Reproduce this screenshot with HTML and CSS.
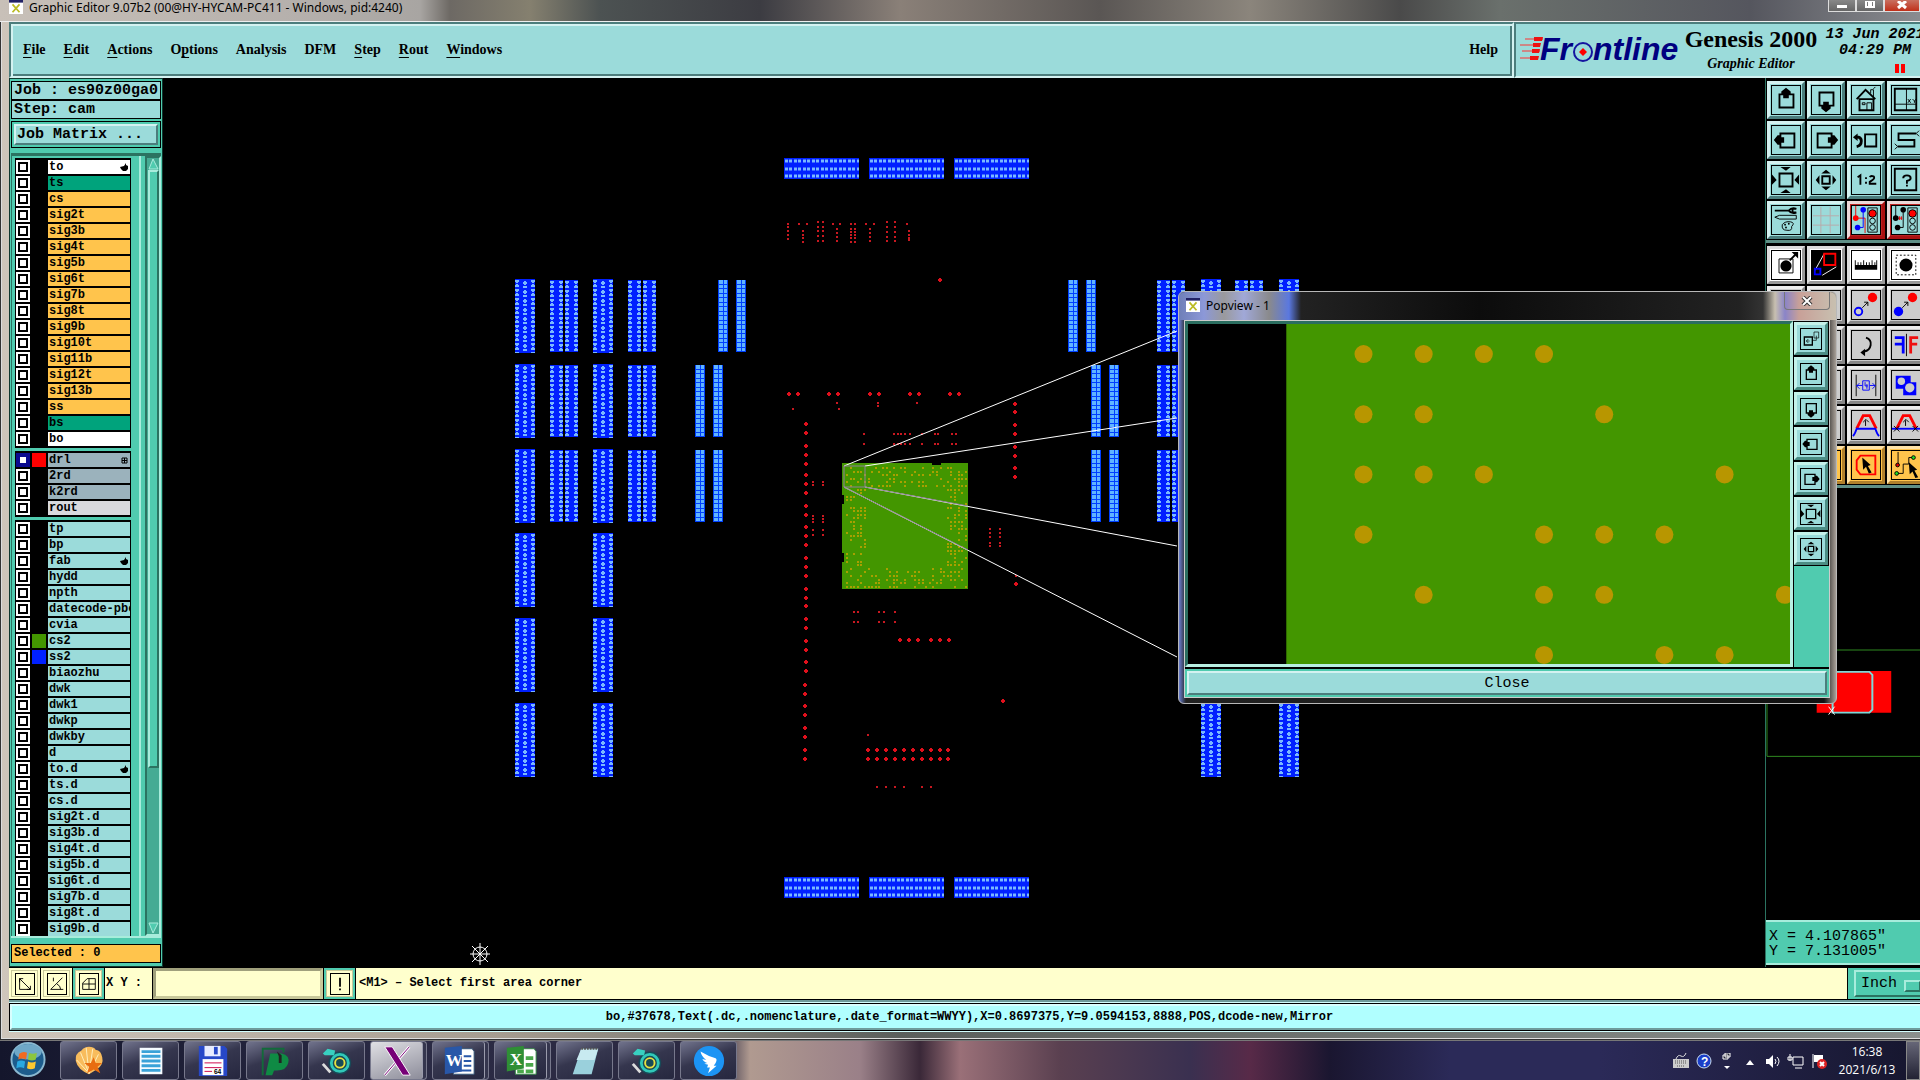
FILE: index.html
```
<!DOCTYPE html>
<html lang="en">
<head>
    <meta charset="UTF-8">
    <meta name="viewport" content="width=device-width, initial-scale=1.0">
    <title>Graphic Editor 9.07b2</title>
    <link rel="stylesheet" href="styles.css">
</head>
<body>

<!-- Icon set, all drawn on a 30x30 grid -->
<svg class="defs" width="0" height="0">
    <symbol id="pan-up" viewBox="0 0 30 30"><path d="M8 9h15v14H8z" fill="none" stroke="#000" stroke-width="2"/><path d="M15 2l5 4v3h-2v4h-6V9h-2V6z"/></symbol>
    <symbol id="pan-down" viewBox="0 0 30 30"><path d="M8 7h15v14H8z" fill="none" stroke="#000" stroke-width="2"/><path d="M15 28l-5-4v-3h2v-4h6v4h2v3z"/></symbol>
    <symbol id="pan-left" viewBox="0 0 30 30"><path d="M9 8h15v15H9z" fill="none" stroke="#000" stroke-width="2"/><path d="M2 15l4-5h3v2h4v6H9v2H6z"/></symbol>
    <symbol id="pan-right" viewBox="0 0 30 30"><path d="M6 8h15v15H6z" fill="none" stroke="#000" stroke-width="2"/><path d="M28 15l-4-5h-3v2h-4v6h4v2h3z"/></symbol>
    <symbol id="home" viewBox="0 0 30 30"><g fill="none" stroke="#000"><path d="M5 14L14.500 4L25 14M8 14h15v12H8z" stroke-width="2"/><path d="M20 8V4h3v8M23 3l2-2M16 26v-8h5v8M11 18h3v2h-3z"/></g></symbol>
    <symbol id="grid-xy" viewBox="0 0 30 30"><path d="M3 3h23v23H3z" fill="none" stroke="#000" stroke-width="2"/><path d="M3 19.500h23M15.500 3v23M17 14l3 4M20 14l-3 4M22 14l2 2l2-2M24 16v2" fill="none" stroke="#000"/></symbol>
    <symbol id="back" viewBox="0 0 30 30"><path d="M14 9h12v13H14z" fill="none" stroke="#000" stroke-width="2"/><path d="M5 12h2q3 1 3 4q0 5-5 6" fill="none" stroke="#000" stroke-width="3"/><path d="M1 12l5-4v8z"/></symbol>
    <symbol id="snake" viewBox="0 0 30 30"><path d="M26 8H7v7h17v7H6" fill="none" stroke="#000" stroke-width="2"/><path d="M6 22l-3-3M6 22l-3 3M26 8l3-3M26 8l3 3" stroke="#000"/></symbol>
    <symbol id="zoom-in" viewBox="0 0 30 30"><path d="M8 8h14v14H8z" fill="none" stroke="#000" stroke-width="2"/><path d="M9 1h11l-5 4zM9 29h11l-5-4zM0 9v11l5-5zM29 9v11l-5-5z"/></symbol>
    <symbol id="zoom-out" viewBox="0 0 30 30"><path d="M11 11h8v8h-8z" fill="none" stroke="#000" stroke-width="2"/><path d="M10 8h10l-5-4zM10 22h10l-5 4zM8 10v10l-4-5zM22 10v10l4-5z"/></symbol>
    <symbol id="half" viewBox="0 0 30 30"><path d="M6 12l3-2v10M19 12q1-2 4-1q2 2-1 4l-3 2v2h7" fill="none" stroke="#000" stroke-width="2"/><path d="M14 12h2v2h-2zM14 17h2v2h-2z"/></symbol>
    <symbol id="query" viewBox="0 0 30 30"><path d="M3 3h23v23H3z" fill="none" stroke="#000" stroke-width="2"/><path d="M12 13q0-3 4-3t4 3q0 2-4 3v3M16 20v2" fill="none" stroke="#000" stroke-width="2"/></symbol>
    <symbol id="tools" viewBox="0 0 30 30"><path d="M3 5h15M18 5q3-4 8-2h-4v4h4q-5 2-8-2" fill="none" stroke="#000" stroke-width="2"/><path d="M3 12l5-2h18v4H8zM11 20q3-4 9-3q5 1 1 5q1 5-5 4q-6 0-5-6z" fill="none" stroke="#000"/><circle cx="14" cy="20" r="1"/><circle cx="18" cy="19" r="1"/><circle cx="15" cy="23" r="1"/></symbol>
    <symbol id="grid" viewBox="0 0 30 30"><path d="M9.500 1v28M19.500 1v28M1 10.500h28M1 20.500h28" stroke="#b9a9a9"/></symbol>
    <symbol id="net-a" viewBox="0 0 30 30"><path d="M4 0v13h10v16" fill="none" stroke="#e00"/><path d="M12 4v19H7" fill="none" stroke="#00f"/><circle cx="4" cy="13" r="3" fill="#f00"/><circle cx="12" cy="4" r="3" fill="#00f"/><circle cx="6" cy="23" r="3" fill="#00f"/><path d="M17 2h10v26H17z" fill="#9bdbda" stroke="#000"/><circle cx="22" cy="8" r="4" fill="#f00" stroke="#000"/><circle cx="22" cy="16" r="3" fill="none" stroke="#000"/><circle cx="22" cy="23" r="3" fill="none" stroke="#000"/></symbol>
    <symbol id="net-b" viewBox="0 0 30 30"><path d="M4 0v13M12 4v19H7" fill="none" stroke="#000"/><path d="M6 11v4M8 11v4M10 11v4M5 13h6" stroke="#e00"/><circle cx="4" cy="13" r="3"/><circle cx="12" cy="4" r="3"/><circle cx="6" cy="23" r="3"/><path d="M17 2h10v26H17z" fill="#9bdbda" stroke="#000"/><circle cx="22" cy="8" r="4" fill="#f00" stroke="#000"/><circle cx="22" cy="16" r="3" fill="none" stroke="#000"/><circle cx="22" cy="23" r="3" fill="none" stroke="#000"/></symbol>
    <symbol id="pad-move" viewBox="0 0 30 30"><path d="M7.500 8.500h15v15h-15z" fill="none" stroke="#000"/><circle cx="15" cy="16" r="6"/><path d="M19 10l6-6" stroke="#000" stroke-width="2"/><path d="M28 1v7l-7-7z"/></symbol>
    <symbol id="popview" viewBox="0 0 30 30"><path d="M0 0h30v30H0z"/><path d="M3 21L13 3M11 26L26 17" stroke="#fff"/><path d="M13 3h12v12H13z" fill="none" stroke="#f00" stroke-width="2"/><path d="M3 19h6v6H3z" fill="none" stroke="#00f" stroke-width="2"/></symbol>
    <symbol id="ruler" viewBox="0 0 30 30"><path d="M3 10h1v5h2v-3h1v3h2v-3h1v3h2v-5h1v5h2v-3h1v3h2v-3h1v3h2v-5h1v5h2v-3h1v3h1v-5h1v10H3z"/></symbol>
    <symbol id="pad-select" viewBox="0 0 30 30"><path d="M4.500 4.500h21v21h-21z" fill="none" stroke="#000" stroke-dasharray="2 2"/><circle cx="15" cy="15" r="7"/></symbol>
    <symbol id="copy-to" viewBox="0 0 30 30"><circle cx="22" cy="7" r="5" fill="#f00"/><circle cx="7" cy="22" r="4" fill="none" stroke="#00f" stroke-width="2"/><path d="M11 18l6-6M13 12h4v4" fill="none" stroke="#000"/></symbol>
    <symbol id="move-to" viewBox="0 0 30 30"><circle cx="22" cy="7" r="5" fill="#f00"/><circle cx="7" cy="22" r="5" fill="#00f"/><path d="M11 18l6-6M13 12h4v4" fill="none" stroke="#000"/></symbol>
    <symbol id="rotate" viewBox="0 0 30 30"><path d="M15 7q6 2 5 8t-7 7" fill="none" stroke="#000" stroke-width="2"/><path d="M9 23l5-4v8z"/></symbol>
    <symbol id="mirror" viewBox="0 0 30 30"><path d="M3 7h9v17M12 14H3" fill="none" stroke="#00f" stroke-width="3"/><path d="M15.500 3v24" stroke="#000"/><path d="M28 7h-8v17M20 14h7" fill="none" stroke="#e11" stroke-width="3"/></symbol>
    <symbol id="stretch" viewBox="0 0 30 30"><path d="M4.500 4v23M25.500 4v23" stroke="#000"/><path d="M11.500 10.500h7v10h-7zM5 15.500h6M19 15.500h6M8 13l-3 3l3 3M22 13l3 3l-3 3M14 12v4h3M16 14v5" fill="none" stroke="#00f"/></symbol>
    <symbol id="merge" viewBox="0 0 30 30"><path d="M4 5h16v7h6v14H12v-7H4z" fill="#00f"/><circle cx="10" cy="11" r="4" fill="#ccc"/><circle cx="19" cy="18" r="5" fill="#ccc"/></symbol>
    <symbol id="reshape" viewBox="0 0 30 30"><path d="M5 19L12 5h7l7 14" fill="none" stroke="#f00" stroke-width="3"/><path d="M1 27q2-2 4-8h20q2 6 4 8" fill="none" stroke="#00f" stroke-width="2"/><path d="M14.500 16v-6M12 12l3-3l3 3" fill="none" stroke="#000"/></symbol>
    <symbol id="reshape-b" viewBox="0 0 30 30"><path d="M5 19L12 5h7l7 14" fill="none" stroke="#f00" stroke-width="3"/><path d="M0 19h30" stroke="#00f" stroke-width="2"/><path d="M14.500 16v-6M12 12l3-3l3 3M2 16l6 6M8 16l-6 6M22 16l6 6M28 16l-6 6" fill="none" stroke="#000"/></symbol>
    <symbol id="poly-select" viewBox="0 0 30 30"><path d="M9 5h16v20H9l-4-5V10z" fill="none" stroke="#f00" stroke-width="2"/><path d="M11 7l9 8l-3 1l4 7l-3 1l-3-7l-3 3z"/></symbol>
    <symbol id="net-select" viewBox="0 0 30 30"><path d="M6.500 1v14M6 24h6V14h6V7h5" fill="none" stroke="#000"/><circle cx="6" cy="15" r="2" fill="#d00" stroke="#000"/><circle cx="5" cy="24" r="2" fill="#2d2" stroke="#000"/><circle cx="23" cy="7" r="2" fill="#2d2" stroke="#000"/><path d="M18 12l9 8l-3 1l4 7l-3 1l-3-7l-3 3z"/></symbol>
    <symbol id="pop-copy" viewBox="0 0 30 30"><path d="M5 12h12v12H5z" fill="none" stroke="#000" stroke-width="2"/><path d="M19.500 4.500h7v9h-7zM17 17h6v-7M13 18H8M11 15l-3 3l3 3" fill="none" stroke="#000"/></symbol>
    <symbol id="x-logo" viewBox="0 0 16 16"><path d="M0 0h16v16H0z" fill="#fff"/><path d="M0 0h16v3H0z" fill="#226"/><path d="M4 5l8 9M12 5L4 14" stroke="#bb2" stroke-width="2"/></symbol>
    <symbol id="genesis" viewBox="0 0 36 36"><circle cx="21" cy="20" r="12" fill="#174a58"/><circle cx="21" cy="20" r="9" fill="none" stroke="#30c8b8" stroke-width="3"/><circle cx="21" cy="20" r="5" fill="none" stroke="#e8e040" stroke-width="2"/><path d="M3 10l5-5l8 2l-1 5H5z" fill="#38d0c0"/><path d="M3 21l8 9" stroke="#ddd" stroke-width="3"/></symbol>
</svg>

<div class="window">
    <div class="titlebar">
        <svg class="app-icon"><use href="#x-logo"/></svg>
        <span class="title">Graphic Editor 9.07b2 (00@HY-HYCAM-PC411 - Windows, pid:4240)</span>
        <div class="caption-buttons">
            <button aria-label="Minimize"><svg viewBox="0 0 12 10"><path d="M1 4h10v3H1z" fill="#fff"/></svg></button>
            <button aria-label="Maximize"><svg viewBox="0 0 12 10"><path d="M2 0h8v6H2zM5 2h2v2H5z" fill="none" stroke="#fff" stroke-width="2"/></svg></button>
            <button class="close" aria-label="Close window"><svg viewBox="0 0 12 10"><path d="M2 0l8 7M10 0L2 7" stroke="#fff" stroke-width="3"/></svg></button>
        </div>
    </div>

    <div class="app">
        <header>
            <nav class="menubar">
                <button><u>F</u>ile</button>
                <button><u>E</u>dit</button>
                <button><u>A</u>ctions</button>
                <button>O<u>p</u>tions</button>
                <button>Analysis</button>
                <button>DFM</button>
                <button><u>S</u>tep</button>
                <button><u>R</u>out</button>
                <button><u>W</u>indows</button>
                <button class="help">Help</button>
            </nav>
            <div class="brand">
                <svg class="logo" viewBox="0 0 162 36">
                    <path d="M5 6h18M0 12h20M2 18h18M0 25h18" stroke="#f33"/>
                    <path d="M14 4h9l-1 4h-8zM13 10h8l-1 4h-7zM12 16h8l-1 4h-7zM10 23h9l-1 4h-8z" fill="#e11"/>
                    <g class="logo-text"><text x="20" y="27">Fr</text><text x="73" y="27">ntline</text></g>
                    <circle cx="63" cy="19" r="9" fill="none" stroke="#1515a0" stroke-width="2"/>
                    <path d="M63 15l4 4l-4 4l-4-4z" fill="#f00"/>
                </svg>
                <div class="product">
                    <div class="product-name">Genesis 2000</div>
                    <div class="product-part">Graphic Editor</div>
                </div>
                <div class="clock">
                    <div>13 Jun 2021</div>
                    <div>04:29 PM</div>
                    <div class="pause"></div>
                </div>
            </div>
        </header>

        <main>
            <aside class="left-panel">
                <div class="job-line">Job : es90z00ga0</div>
                <div class="job-line">Step: cam</div>
                <div class="matrix-box"><button>Job Matrix ...</button></div>
                <div class="layer-area">
                    <div id="layers" class="layers"></div>
                    <div class="scrollbar">
                        <svg viewBox="0 0 11 12"><path d="M5 1L1 11h9z" fill="#50cbaf" stroke="#a8ecdc"/></svg>
                        <div class="thumb"></div>
                        <svg viewBox="0 0 11 12"><path d="M1 1h9L5 11z" fill="#50cbaf" stroke="#a8ecdc"/></svg>
                    </div>
                </div>
                <div class="selected">Selected : 0</div>
            </aside>

            <svg id="board" class="board" viewBox="163 78 1602 889" preserveAspectRatio="xMidYMid meet">
                <defs>
                    <pattern id="pads-a" width="20" height="9" patternUnits="userSpaceOnUse">
                        <path d="M0 0h20v9H0z" fill="#0020ff"/>
                        <path d="M0 2h4M2 1v3M0 7h4M2 5v3M16 2h4M18 1v3M16 7h4M18 5v3M8 4h4M10 2v4M8 8h4M10 7v2" stroke="#7ab8ff" stroke-width="2"/>
                    </pattern>
                    <pattern id="pads-b" width="13" height="9" patternUnits="userSpaceOnUse">
                        <path d="M0 0h13v9H0z" fill="#0020ff"/>
                        <path d="M0 2h4M2 1v3M0 7h4M2 5v3M9 2h4M11 1v3M9 7h4M11 5v3" stroke="#7ab8ff" stroke-width="2"/>
                    </pattern>
                    <pattern id="pads-c" width="10" height="9" patternUnits="userSpaceOnUse">
                        <path d="M0 0h10v9H0z" fill="#0040ff"/>
                        <path d="M1 0h4v4H1zM6 0h3v4H6zM1 5h4v3H1zM6 5h3v3H6z" fill="#60b4ff"/>
                    </pattern>
                    <pattern id="pads-h" width="9" height="21" patternUnits="userSpaceOnUse">
                        <path d="M0 0h9v21H0z" fill="#0020ff"/>
                        <path d="M1 3h3M5 3h3M1 11h3M5 11h3M1 18h3M5 18h3" stroke="#7ab8ff" stroke-width="3"/>
                    </pattern>
                </defs>
                <g id="pads"></g>
                <path d="M842 463h90v2h9v-2h27v126H842v-27h2v-9h-2v-49h2v-9h-2z" fill="#439600"/>
                <g id="chip-dots" fill="#a8a000"></g>
                <g id="drills" fill="#e0101c"></g>
                <path d="M844 466L1177 331M865 466L1177 418M865 487L1177 546M844 487L1177 657" stroke="#fff"/>
                <path d="M844 466h21v21h-21zM865 487L968 506M844 487L968 550" fill="none" stroke="#8f7f98"/>
                <g fill="none" stroke="#fff"><circle cx="480" cy="954" r="7"/><path d="M470 954h20M480 943v22M472 946l16 16M488 946l-16 16"/></g>
            </svg>

            <aside class="right-panel">
                <div class="toolbar teal">
                    <button aria-label="Pan up"><svg><use href="#pan-up"/></svg></button>
                    <button aria-label="Pan down"><svg><use href="#pan-down"/></svg></button>
                    <button aria-label="Home"><svg><use href="#home"/></svg></button>
                    <button aria-label="Coordinates"><svg><use href="#grid-xy"/></svg></button>
                    <button aria-label="Pan left"><svg><use href="#pan-left"/></svg></button>
                    <button aria-label="Pan right"><svg><use href="#pan-right"/></svg></button>
                    <button aria-label="Previous view"><svg><use href="#back"/></svg></button>
                    <button aria-label="Path"><svg><use href="#snake"/></svg></button>
                    <button aria-label="Zoom in"><svg><use href="#zoom-in"/></svg></button>
                    <button aria-label="Zoom out"><svg><use href="#zoom-out"/></svg></button>
                    <button aria-label="Scale"><svg><use href="#half"/></svg></button>
                    <button aria-label="Query"><svg><use href="#query"/></svg></button>
                    <button aria-label="Settings"><svg><use href="#tools"/></svg></button>
                    <button aria-label="Grid"><svg><use href="#grid"/></svg></button>
                    <button class="alert" aria-label="Net check"><svg><use href="#net-a"/></svg></button>
                    <button class="alert" aria-label="Short check"><svg><use href="#net-b"/></svg></button>
                </div>
                <div class="toolbar">
                    <button class="white" aria-label="Edit pad"><svg><use href="#pad-move"/></svg></button>
                    <button class="white" aria-label="Popview"><svg><use href="#popview"/></svg></button>
                    <button class="white" aria-label="Measure"><svg><use href="#ruler"/></svg></button>
                    <button class="white" aria-label="Select"><svg><use href="#pad-select"/></svg></button>
                    <button aria-label="Add"><svg></svg></button>
                    <button aria-label="Delete"><svg></svg></button>
                    <button aria-label="Copy"><svg><use href="#copy-to"/></svg></button>
                    <button aria-label="Move"><svg><use href="#move-to"/></svg></button>
                    <button aria-label="Resize"><svg></svg></button>
                    <button aria-label="Scale feature"><svg></svg></button>
                    <button aria-label="Rotate"><svg><use href="#rotate"/></svg></button>
                    <button aria-label="Mirror"><svg><use href="#mirror"/></svg></button>
                    <button aria-label="Connect"><svg></svg></button>
                    <button aria-label="Break"><svg></svg></button>
                    <button aria-label="Stretch"><svg><use href="#stretch"/></svg></button>
                    <button aria-label="Merge"><svg><use href="#merge"/></svg></button>
                    <button aria-label="Arc"><svg></svg></button>
                    <button aria-label="Line"><svg></svg></button>
                    <button aria-label="Reshape"><svg><use href="#reshape"/></svg></button>
                    <button aria-label="Reshape cut"><svg><use href="#reshape-b"/></svg></button>
                    <button class="orange" aria-label="Select one"><svg></svg></button>
                    <button class="orange" aria-label="Select box"><svg></svg></button>
                    <button class="orange" aria-label="Select polygon"><svg><use href="#poly-select"/></svg></button>
                    <button class="orange" aria-label="Select net"><svg><use href="#net-select"/></svg></button>
                </div>
                <svg class="overview" viewBox="0 0 165 433" preserveAspectRatio="xMinYMin meet">
                    <path d="M165 163H1v107h164" fill="none" stroke="#2f8a20"/>
                    <path d="M51 184h75v42H51z" fill="#f00"/>
                    <path d="M67 226V185h37l3 3v35l-3 3z" fill="none" stroke="#7fd8d8" stroke-width="2"/>
                    <path d="M63 220l6 8M69 220l-6 8" stroke="#fff"/>
                </svg>
                <div class="coords">
                    <div>X = 4.107865"</div>
                    <div>Y = 7.131005"</div>
                </div>
            </aside>

            <section class="popview">
                <div class="pop-title">
                    <svg class="app-icon"><use href="#x-logo"/></svg>
                    <span>Popview - 1</span>
                    <button aria-label="Close popview"><svg viewBox="0 0 12 10"><path d="M2 1l8 8M10 1L2 9" stroke="#333" stroke-width="4"/><path d="M2 1l8 8M10 1L2 9" stroke="#fff" stroke-width="2"/></svg></button>
                </div>
                <div class="pop-body">
                    <div class="pop-main">
                        <svg id="pop-canvas" class="pop-canvas" viewBox="1188 325 601 339" preserveAspectRatio="xMinYMin slice">
                            <path d="M1286 325h520v350h-520z" fill="#439600"/>
                            <g id="pop-dots" fill="#b89600"></g>
                        </svg>
                        <div class="pop-tools">
                            <button aria-label="New popview"><svg><use href="#pop-copy"/></svg></button>
                            <button aria-label="Up"><svg><use href="#pan-up"/></svg></button>
                            <button aria-label="Down"><svg><use href="#pan-down"/></svg></button>
                            <button aria-label="Left"><svg><use href="#pan-left"/></svg></button>
                            <button aria-label="Right"><svg><use href="#pan-right"/></svg></button>
                            <button aria-label="Zoom in view"><svg><use href="#zoom-in"/></svg></button>
                            <button aria-label="Zoom out view"><svg><use href="#zoom-out"/></svg></button>
                        </div>
                    </div>
                    <div class="pop-footer"><button>Close</button></div>
                </div>
            </section>
        </main>

        <div class="command-bar">
            <button class="cmd" aria-label="Absolute"><svg viewBox="0 0 20 20"><path d="M4 4l12 12M4 8V4h4M12 16h4v-4M4 4v12h12" fill="none" stroke="#000"/></svg></button>
            <button class="cmd" aria-label="Angle"><svg viewBox="0 0 20 20"><path d="M3 16L16 3M3 16h14M6 3v4M10 10q4 2 4 6" fill="none" stroke="#000"/></svg></button>
            <button class="cmd on" aria-label="Snap grid"><svg viewBox="0 0 20 20"><path d="M3 16V9l5-5h9v12zM10 4v12M3 10h14" fill="none" stroke="#000"/></svg></button>
            <label for="xy">X Y :</label>
            <input id="xy" type="text">
            <button class="cmd on" aria-label="Enter"><svg viewBox="0 0 20 20"><path d="M9 3h2v10H9zM9 15h2v2H9z"/></svg></button>
            <div class="prompt">&lt;M1&gt; – Select first area corner</div>
            <div class="units"><select aria-label="Units"><option>Inch</option></select></div>
        </div>
        <div class="status-bar"><div>bo,#37678,Text(.dc,.nomenclature,.date_format=WWYY),X=0.8697375,Y=9.0594153,8888,POS,dcode-new,Mirror</div></div>
    </div>
</div>

<footer class="taskbar">
    <button class="start" aria-label="Start"><svg viewBox="0 0 40 40">
        <circle cx="20" cy="19" r="17" fill="#1d5c8c" stroke="#8ab8d0" stroke-width="2"/><ellipse cx="20" cy="11" rx="14" ry="8" fill="#6fa8c8"/>
        <path d="M11 13q4-3 8-1l-1 7q-4-2-8 0z" fill="#f26a22"/><path d="M21 12q4 2 8 0l-1 7q-4 2-8 0z" fill="#8cc63f"/><path d="M9 21q4-2 8 0l-1 7q-4-2-8 0z" fill="#29a8e0"/><path d="M20 21q4 2 8 0l-1 7q-4 2-8 0z" fill="#fdc82f"/></svg></button>
    <button class="task" aria-label="Shell"><svg viewBox="0 0 36 36"><path d="M18 3q5 0 7 3q6 1 7 8q2 8-6 13l-8 5q-12-5-14-14q-1-8 6-11q3-4 8-4z" fill="#f8bc5c"/><path d="M18 31L9 9M18 31L15 4M18 31L22 5M18 31L28 11M18 31L5 17" stroke="#fff0c0"/><path d="M23 14l2 6h7l-5 4l3 7l-7-4l-7 4l2-7l-5-4h7z" fill="#e86c10"/></svg></button>
    <button class="task" aria-label="Notes"><svg viewBox="0 0 36 36"><path d="M6 4h24v28H6z" fill="#f5fbff"/><path d="M8 8h20M8 13h20M8 18h20M8 23h20M8 28h20" stroke="#3aa2d8" stroke-width="3"/></svg></button>
    <button class="task" aria-label="Save tool"><svg viewBox="0 0 36 36"><path d="M3 2h27l3 3v29H3z" fill="#2748c8"/><path d="M9 2h17v11H9z" fill="#e8ecff"/><path d="M19 3h4v8h-4z" fill="#2748c8"/><path d="M7 16h22v17H7z" fill="#fff"/><path d="M9 20h18M9 25h18M9 29h8" stroke="#c04"/><text class="tiny" x="19" y="32">64</text></svg></button>
    <button class="task" aria-label="Plot"><svg viewBox="0 0 36 36"><path d="M5 33V5h22v4" fill="none" stroke="#126a3a" stroke-width="2"/><path d="M8 33l5-23h12q9 2 7 10t-12 8h-3l-2 5z" fill="#0f8a44"/><path d="M20 8l5 4v8h-3v-7z" fill="#222"/></svg></button>
    <button class="task" aria-label="Genesis"><svg><use href="#genesis"/></svg></button>
    <button class="task stack active" aria-label="X server"><svg viewBox="0 0 36 36"><path d="M31 3L5 33" stroke="#fff" stroke-width="3"/><path d="M31 3L5 33" stroke="#707" /><path d="M5 3h8l19 30h-8z" fill="#707" stroke="#fff"/></svg></button>
    <button class="task stack" aria-label="Word"><svg viewBox="0 0 36 36"><path d="M12 5h20l2 3v24H12z" fill="#fff" stroke="#357"/><path d="M3 4l18-2v27l-18 3z" fill="#2857a8"/><text class="office" x="4" y="23">W</text><path d="M23 13h8M23 18h8M23 23h8M14 28h17" stroke="#2857a8" stroke-width="2"/></svg></button>
    <button class="task stack" aria-label="Excel"><svg viewBox="0 0 36 36"><path d="M12 5h20l2 3v24H12z" fill="#fff" stroke="#384"/><path d="M3 4l18-2v24l-18 3z" fill="#2f8f35"/><text class="office" x="6" y="22">X</text><path d="M23 13h8v4h-8zM23 20h8v4h-8zM14 27h7v4h-7zM23 27h8v4h-8z" fill="#4aa84a"/></svg></button>
    <button class="task" aria-label="Notepad"><svg viewBox="0 0 36 36"><path d="M14 5h18l-7 27H5z" fill="#9ad0dc"/><path d="M14 5h18l-4 12H9z" fill="#c8eaf0"/><path d="M14 5h18" stroke="#555" stroke-width="2" stroke-dasharray="2 1"/></svg></button>
    <button class="task" aria-label="Genesis editor"><svg><use href="#genesis"/></svg></button>
    <button class="task" aria-label="DingTalk"><svg viewBox="0 0 36 36"><circle cx="18" cy="18" r="16" fill="#1c94f4"/><path d="M9 8q8 5 16 7q2 1 0 5l-2 3h3l-9 8l2-6h-3l1-3l-4-1l3-1q-4-1-5-4l4 1q-5-4-6-9z" fill="#fff"/></svg></button>

    <div class="tray">
        <svg viewBox="0 0 18 16"><path d="M4 6q2-5 5-3t5-3" fill="none" stroke="#ddd"/><path d="M1 6h16v9H1z" fill="#ccc"/><path d="M3 8h12M3 10h12M5 13h8" stroke="#555" stroke-dasharray="1 1"/></svg>
        <svg viewBox="0 0 18 16"><circle cx="9" cy="8" r="7" fill="#1b3fc8" stroke="#cde"/><text class="help-mark" x="6" y="13">?</text></svg>
        <svg viewBox="0 0 18 16"><path d="M7 0h5v4H7zM5 2h5v4H5z" fill="#223" stroke="#fff"/><path d="M6 13h6l-3 3z" fill="#fff"/></svg>
        <svg viewBox="0 0 18 16"><path d="M9 7l4 5H5z" fill="#fff"/></svg>
        <svg viewBox="0 0 18 16"><path d="M2 6h3l4-4v13l-4-4H2z" fill="#fff"/><path d="M11 6q2 2 0 5M13 4q4 4 0 9" fill="none" stroke="#fff"/></svg>
        <svg viewBox="0 0 18 16"><path d="M6 4h10v8H6zM8 15h7M3 1v7M1 4h4v3H1z" fill="none" stroke="#fff"/></svg>
        <svg viewBox="0 0 18 16"><path d="M3 1v14" stroke="#fff"/><path d="M4 2h9v7H4z" fill="#fff"/><circle cx="12" cy="11" r="5" fill="#d22"/><path d="M10 9l4 4M14 9l-4 4" stroke="#fff" stroke-width="2"/></svg>
        <div class="tray-clock"><div>16:38</div><div>2021/6/13</div></div>
        <button class="show-desktop" aria-label="Show desktop"></button>
    </div>
</footer>

<script src="editor.js"></script>
</body>
</html>
```
FILE: styles.css
```
* {
    box-sizing: border-box;
}
body {
    margin: 0;
    height: 100vh;
    overflow: hidden;
    display: flex;
    flex-direction: column;
    background: #000;
    font-family: "Liberation Mono", monospace;
    font-weight: bold;
    color: #000;
}
button, input, select {
    font: inherit;
    color: inherit;
    margin: 0;
    padding: 0;
    border-radius: 0;
}
svg {
    display: block;
}
.defs {
    position: absolute;
}

/* Outer window */
.window {
    flex: 1;
    min-height: 0;
    display: flex;
    flex-direction: column;
    padding: 0 0 8px 9px;
    background: linear-gradient(90deg, #cfc6bb, #a59c90 500px, #5b5f5c 900px, #8a8f8c);
    box-shadow: inset 1px -1px #333, inset 2px -2px #ddd;
}
.titlebar {
    height: 22px;
    flex: none;
    display: flex;
    align-items: flex-start;
    margin-left: -9px;
    padding-left: 8px;
    border-bottom: 1px solid #eee;
    font: 12px/15px "Noto Sans", sans-serif;
    background: linear-gradient(90deg, #c8c0b8, #b5b0ac 300px, #a8a5a2 420px, #6d6964 450px, #85806f 530px, #4c5252 600px, #3c3c42 760px, #8a8078 900px, #5a5654 1100px, #8b857c 1250px, #4a4a4a 1400px, #6a706c 1500px, #55565e 1750px, #8a8c90);
}
.app-icon {
    width: 16px;
    height: 14px;
    margin-right: 5px;
}
.caption-buttons {
    margin-left: auto;
    display: flex;
}
.caption-buttons button {
    width: 28px;
    height: 12px;
    border: 1px solid #ddd;
    border-top: 0;
    background: linear-gradient(#888, #666);
}
.caption-buttons .close {
    width: 36px;
    background: linear-gradient(#c97060, #c0301a);
}
.caption-buttons svg {
    width: 12px;
    height: 10px;
    margin: 0 auto;
}
.app {
    flex: 1;
    min-height: 0;
    display: flex;
    flex-direction: column;
    margin-right: -10px;
}

/* Header */
header {
    height: 56px;
    flex: none;
    display: flex;
}
.menubar, .brand {
    background: #9bdbda;
    border: 2px solid;
    border-color: #4c7d7c #d4f2f1 #d4f2f1 #4c7d7c;
    display: flex;
}
.menubar {
    flex: 1;
    align-items: center;
    gap: 18px;
    padding: 0 14px 0 12px;
    box-shadow: inset 2px 2px #d4f2f1, inset -2px -2px #4c7d7c;
    font: bold 14px/20px "Liberation Serif", serif;
}
.menubar button {
    border: 0;
    background: none;
}
.menubar u {
    text-underline-offset: 3px;
}
.menubar .help {
    margin-left: auto;
}
.brand {
    width: 416px;
    flex: none;
    padding-left: 4px;
}
.logo {
    width: 162px;
    height: 36px;
    margin-top: 9px;
}
.logo-text {
    font: italic bold 32px "Liberation Sans", sans-serif;
    fill: #000080;
}
.product {
    width: 138px;
    text-align: center;
    font-family: "Liberation Serif", serif;
    white-space: nowrap;
}
.product-name {
    font-size: 24px;
    line-height: 30px;
}
.product-part {
    font: italic bold 14px/20px "Liberation Serif", serif;
}
.clock {
    width: 100px;
    margin-left: 5px;
    padding-top: 3px;
    text-align: center;
    font-style: italic;
    font-size: 15px;
    line-height: 16px;
    white-space: nowrap;
}
.pause {
    width: 10px;
    height: 9px;
    margin: 5px 20px 0 auto;
    border: solid #f00;
    border-width: 0 4px;
}

/* Work area */
main {
    flex: 1;
    min-height: 0;
    display: flex;
    position: relative;
    background: #000;
}
.left-panel {
    width: 154px;
    flex: none;
    display: flex;
    flex-direction: column;
    padding: 2px 1px 3px;
    background: #50cbaf;
    border: 1px solid #10382f;
    font-size: 15px;
}
.job-line {
    height: 19px;
    line-height: 17px;
    padding-left: 2px;
    border: 1px solid #000;
    background: #9bdbda;
    white-space: nowrap;
    overflow: hidden;
}
.matrix-box {
    margin-top: 2px;
    padding: 2px;
    border: 1px solid #000;
}
.matrix-box button {
    display: block;
    width: 100%;
    height: 21px;
    padding-left: 1px;
    text-align: left;
    background: #9bdbda;
    border: 2px solid;
    border-color: #d4f2f1 #4c7d7c #4c7d7c #d4f2f1;
    line-height: 17px;
}
.layer-area {
    flex: 1;
    min-height: 0;
    display: flex;
    justify-content: space-between;
    margin: 5px 0 6px;
    border-top: 3px solid #2b7361;
    border-bottom: 2px solid #a8ecdc;
}
.layers {
    width: 130px;
    padding: 2px 0 0 3px;
    overflow: hidden;
    border-right: 2px solid #a8ecdc;
    border-left: 1px solid #2b7361;
    font-size: 12px;
}
.layer-group {
    width: 116px;
    margin-bottom: 3px;
    padding: 1px;
    background: #000;
}
.layer {
    display: flex;
    gap: 2px;
    height: 16px;
    padding: 1px 0;
}
.layer input {
    appearance: none;
    width: 14px;
    height: 14px;
    flex: none;
    background: #fff;
    border: 2px solid #fff;
    box-shadow: inset 0 0 0 2px #000;
}
.layer input:checked {
    border-color: #0a0a90;
    box-shadow: inset 0 0 0 2px #0a0a90;
}
.swatch {
    width: 14px;
    flex: none;
}
.layer label {
    flex: 1;
    min-width: 0;
    display: flex;
    align-items: center;
    overflow: hidden;
    padding-left: 1px;
    line-height: 14px;
    white-space: nowrap;
}
.layer svg {
    width: 8px;
    height: 8px;
    margin: 0 2px 0 auto;
}
.white-layer { background: #fff; }
.mask { background: #00a37c; }
.signal { background: #ffc44c; }
.drill { background: #9bb2bc; }
.route { background: #d9d9dd; }
.doc { background: #9bdbda; }
.swatch.red { background: #f00; }
.swatch.green { background: #439600; }
.swatch.blue { background: #0020ff; }
.scrollbar {
    width: 16px;
    display: flex;
    flex-direction: column;
    align-items: center;
    background: #45ab94;
    border: 2px solid;
    border-color: #2b7361 #a8ecdc #a8ecdc #2b7361;
}
.scrollbar svg {
    width: 11px;
    height: 12px;
}
.thumb {
    width: 11px;
    height: 77%;
    margin-bottom: auto;
    background: #50cbaf;
    border: 2px solid;
    border-color: #a8ecdc #2b7361 #2b7361 #a8ecdc;
}
.selected {
    height: 19px;
    padding-left: 2px;
    background: #ffc44c;
    border: 1px solid #000;
    font-size: 12px;
    line-height: 17px;
}
.board {
    flex: 1;
    min-width: 0;
    height: 100%;
}

/* Right side tools */
.right-panel {
    width: 165px;
    flex: none;
    display: flex;
    flex-direction: column;
    border-left: 1px solid #2b7361;
}
.toolbar {
    display: grid;
    grid-template-columns: repeat(4, 38px);
    gap: 2px;
    padding: 3px 1px 1px;
    border-bottom: 3px solid #5f8f86;
}
.toolbar button, .pop-tools button {
    background: #ccc;
    border: 3px solid;
    border-color: #eee #888 #888 #eee;
}
.toolbar button {
    height: 38px;
}
.toolbar svg {
    width: 30px;
    height: 30px;
    margin: 0 auto;
    border: 1px solid #000;
}
.toolbar.teal button {
    background: #9bdbda;
    border-color: #d4f2f1 #4c7d7c #4c7d7c #d4f2f1;
}
.toolbar.teal .alert {
    background: #b22;
    border-color: #ecd8d8 #a11 #a11 #ecd8d8;
}
.toolbar.teal .alert svg {
    background: #9bdbda;
}
.toolbar .white {
    background: #fff;
    border-color: #ddd #999 #999 #ddd;
}
.toolbar .orange {
    background: #ffc44c;
    border-color: #ffe3a8 #b0802c #b0802c #ffe3a8;
}
.overview {
    flex: 1;
    min-height: 0;
    width: 100%;
}
.coords {
    padding: 7px 3px 4px;
    background: #50cbaf;
    border-top: 2px solid #a8ecdc;
    border-bottom: 2px solid #a8ecdc;
    font-size: 15px;
    font-weight: normal;
    line-height: 15px;
    margin-bottom: 2px;
}

/* Floating popview window */
.popview {
    position: absolute;
    left: 1169px;
    top: 213px;
    width: 659px;
    height: 413px;
    display: flex;
    flex-direction: column;
    padding: 0 6px 5px 5px;
    border: 1px solid #b8b8b8;
    border-radius: 6px;
    background: linear-gradient(90deg, #6a7fd0, #222 7px, #111 645px, #a8a098);
}
.pop-title {
    height: 28px;
    flex: none;
    display: flex;
    align-items: center;
    margin: 0 -6px 0 -5px;
    padding: 0 0 2px 6px;
    border-radius: 6px 6px 0 0;
    font: 12px "Noto Sans", sans-serif;
    background: linear-gradient(90deg, #6f7fb8, #8c98d8 25px, #9a9a9c 45px, #a0a8d8 65px, #8a8a8c 90px, #5a78e0 110px, #222 122px, #0c0c0c 300px, #222 560px, #333 584px, #c8c0b0 596px, #8a84c8 606px, #c8a098 620px, #c8c0b0);
}
.pop-title button {
    align-self: flex-start;
    width: 46px;
    height: 18px;
    margin: 0 6px 0 auto;
    border: 1px solid #777;
    border-top: 0;
    border-radius: 0 0 4px 4px;
    background: none;
}
.pop-title button svg {
    width: 12px;
    height: 10px;
    margin: 0 auto;
}
.pop-body {
    flex: 1;
    min-height: 0;
    display: flex;
    flex-direction: column;
    border: 1px solid #ccc;
    background: #50cbaf;
}
.pop-main {
    flex: 1;
    min-height: 0;
    display: flex;
}
.pop-canvas {
    flex: 1;
    min-width: 0;
    height: 100%;
    background: #000;
    border: 3px solid;
    border-color: #2b6e60 #b8efe2 #b8efe2 #2b6e60;
}
.pop-tools {
    width: 36px;
    border-left: 1px solid #000;
    display: flex;
    flex-direction: column;
    gap: 2px;
    padding-top: 1px;
}
.pop-tools button {
    width: 34px;
    height: 33px;
    background: #9bdbda;
    border-color: #c4f2ea #4c8d84 #4c8d84 #c4f2ea;
    outline: 1px solid #000;
}
.pop-tools svg {
    width: 22px;
    height: 22px;
    margin: 0 auto;
    border: 1px solid #000;
}
.pop-footer {
    height: 30px;
    padding: 2px;
    border-top: 2px solid #000;
}
.pop-footer button {
    width: 100%;
    height: 24px;
    font-size: 15px;
    font-weight: normal;
    background: #9bdbda;
    border: 2px solid;
    border-color: #d4f2f1 #4c7d7c #4c7d7c #d4f2f1;
}

/* Command and status lines */
.command-bar {
    height: 33px;
    flex: none;
    display: flex;
    gap: 1px;
    padding: 1px 0;
    background: #000;
    font-size: 12px;
}
.cmd {
    width: 31px;
    background: #ffffcd;
    border: 3px solid #ffffcd;
    outline: 1px solid #c8c89a;
    outline-offset: -3px;
}
.cmd svg {
    width: 20px;
    height: 22px;
    margin: 0 auto;
    border: 1px solid #000;
}
.cmd.on {
    border-color: #50cbaf;
}
.command-bar label {
    width: 47px;
    padding-left: 1px;
    line-height: 31px;
    background: #ffffcd;
    white-space: nowrap;
}
.command-bar input {
    width: 170px;
    padding: 0 5px;
    background: #ffffcd;
    border: 3px solid;
    border-color: #a0a07c #c8c89a #c8c89a #a0a07c;
}
.prompt {
    flex: 1;
    padding-left: 3px;
    line-height: 31px;
    background: #ffffcd;
}
.units {
    position: relative;
    width: 82px;
    padding: 2px 0 2px 6px;
    background: #50cbaf;
}
.units select {
    width: 86px;
    height: 27px;
    padding-left: 5px;
    font-size: 15px;
    font-weight: normal;
    background: #50cbaf;
    border: 2px solid;
    border-color: #a8ecdc #2b7361 #2b7361 #a8ecdc;
    appearance: none;
}
.units::after {
    content: "";
    position: absolute;
    left: 56px;
    top: 12px;
    width: 13px;
    height: 8px;
    border: 2px solid;
    border-color: #a8ecdc #2b7361 #2b7361 #a8ecdc;
}
.status-bar {
    height: 32px;
    flex: none;
    padding: 2px 1px 1px 1px;
    background: #d4ffff;
    border-top: 2px solid #6f9c9c;
    border-bottom: 1px solid #d4ffff;
    font-size: 12px;
}
.status-bar div {
    height: 100%;
    outline: 1px solid #000;
    text-align: center;
    line-height: 23px;
    background: #b0ffff;
    border: 2px solid;
    border-color: #d8ffff #d8ffff #6f9c9c #d8ffff;
}

/* Taskbar */
.taskbar {
    height: 40px;
    flex: none;
    display: flex;
    align-items: stretch;
    gap: 5px;
    border-top: 1px solid #777;
    background: linear-gradient(90deg, #14162c, #2a2a44 400px, #2c2a42 720px, #b09a90 750px, #9a8088 860px, #3a2838 920px, #9a7078 960px, #5a4050 1060px, #3a3050 1190px, #582a48 1250px, #1a1630 1330px, #2b2a58 1450px, #2b2a58 1600px, #16162e);
    color: #fff;
}
.start {
    width: 55px;
    border: 0;
    background: none;
}
.start svg {
    width: 40px;
    height: 39px;
    margin: 0 auto;
}
.task {
    width: 57px;
    border: 1px solid #77788c;
    border-radius: 3px;
    background: linear-gradient(160deg, #71738c, #35364e 45%, #26273f);
}
.task.active {
    background: linear-gradient(160deg, #e0e0e4, #8a8a98);
}
.task.stack {
    padding-right: 4px;
    box-shadow: inset -3px 0 #35364e, inset -4px 0 #9a9bac;
}
.task svg {
    width: 34px;
    height: 34px;
    margin: 0 auto;
}
.tiny {
    font: bold 7px "Liberation Sans", sans-serif;
}
.office {
    font: bold 18px "Liberation Serif", serif;
    fill: #fff;
}
.tray {
    margin-left: auto;
    display: flex;
    align-items: center;
    gap: 5px;
}
.tray svg {
    width: 18px;
    height: 16px;
}
.help-mark {
    font: bold 12px "Liberation Sans", sans-serif;
    fill: #fff;
}
.tray-clock {
    width: 68px;
    text-align: center;
    font: 12px/18px "Open Sans", sans-serif;
}
.show-desktop {
    width: 14px;
    height: 100%;
    border: 1px solid #888;
    background: linear-gradient(#667, #223);
}
```
FILE: editor.js
```
// Layer list: [name, row style, swatch, mark]
const groups = [
    [
        ["to", "white-layer", "", "hand"], ["ts", "mask"], ["cs", "signal"],
        ["sig2t", "signal"], ["sig3b", "signal"], ["sig4t", "signal"], ["sig5b", "signal"],
        ["sig6t", "signal"], ["sig7b", "signal"], ["sig8t", "signal"], ["sig9b", "signal"],
        ["sig10t", "signal"], ["sig11b", "signal"], ["sig12t", "signal"], ["sig13b", "signal"],
        ["ss", "signal"], ["bs", "mask"], ["bo", "white-layer"]
    ],
    [["drl", "drill", "red", "table"], ["2rd", "drill"], ["k2rd", "drill"], ["rout", "route"]],
    [
        ["tp", "doc"], ["bp", "doc"], ["fab", "doc", "", "hand"], ["hydd", "doc"], ["npth", "doc"],
        ["datecode-pbc", "doc"], ["cvia", "doc"], ["cs2", "doc", "green"], ["ss2", "doc", "blue"],
        ["biaozhu", "doc"], ["dwk", "doc"], ["dwk1", "doc"], ["dwkp", "doc"], ["dwkby", "doc"],
        ["d", "doc"], ["to.d", "doc", "", "hand"], ["ts.d", "doc"], ["cs.d", "doc"],
        ["sig2t.d", "doc"], ["sig3b.d", "doc"], ["sig4t.d", "doc"], ["sig5b.d", "doc"],
        ["sig6t.d", "doc"], ["sig7b.d", "doc"], ["sig8t.d", "doc"], ["sig9b.d", "doc"]
    ]
];
const marks = {
    hand: '<svg viewBox="0 0 8 8"><path d="M0 4l4-1l2-3v2l2 1v3L6 8H3L1 6z"/></svg>',
    table: '<svg viewBox="0 0 8 8"><path d="M2 2h5v5H2zM4.500 2v5M2 4.500h5" fill="none" stroke="#000"/></svg>'
};

document.getElementById("layers").innerHTML = groups.map(group => `
    <div class="layer-group">
        ${group.map(([name, style, swatch, mark]) => `
            <div class="layer">
                <input type="checkbox" id="layer-${name}" ${name === "drl" ? "checked" : ""}>
                <span class="swatch ${swatch || ""}"></span>
                <label class="${style}" for="layer-${name}">${name}${marks[mark] || ""}</label>
            </div>`).join("")}
    </div>`).join("");

// Pad blocks, each one moved to its place so the pattern starts at its corner
function block(kind, x, y, w, h) {
    return `<rect width="${w}" height="${h}" transform="translate(${x} ${y})" fill="url(#pads-${kind})"/>`;
}
let pads = "";
[784, 869, 954].forEach(x => {
    pads += block("h", x, 158, 75, 21) + block("h", x, 877, 75, 21);
});
[279, 364, 449, 533, 618, 703].forEach((y, row) => {
    [515, 593, 1201, 1279].forEach(x => pads += block("a", x, y, 20, 74));
    if (row > 2) return;
    [550, 565, 628, 643, 1157, 1172, 1235, 1250].forEach(x => pads += block("b", x, y + 1, 13, 72));
    const narrow = row === 0 ? [718, 736, 1068, 1086] : [695, 713, 1091, 1109];
    narrow.forEach(x => pads += block("c", x, y + 1, 10, 72));
});
document.getElementById("pads").innerHTML = pads;

// Drill holes
const big = [], small = [];
const cross = (list, xs, ys) => xs.forEach(x => ys.forEach(y => list.push([x, y])));
cross(small, [788], [224, 227, 231, 235, 239]);
cross(small, [799, 807, 833, 840, 866, 874, 907], [224]);
cross(small, [803], [231, 235, 238, 242]);
cross(small, [818, 823], [222, 227, 231, 236, 241]);
cross(small, [837, 870], [229, 233, 237, 241]);
cross(small, [851, 855], [224, 229, 232, 235, 238, 242]);
cross(small, [887, 895], [222, 227, 232, 237, 241]);
cross(small, [909], [231, 235, 238, 240]);
cross(small, [793, 839], [409]);
cross(small, [837, 878, 917], [403]);
cross(small, [878], [406]);
cross(small, [813, 823], [482, 485, 516, 519, 522, 530, 535]);
cross(small, [864, 894, 898, 901, 905, 910, 922, 935, 938, 952, 956], [434, 444]);
cross(small, [990, 1000], [529, 533, 537, 543, 546]);
cross(small, [854, 858, 879, 884, 895], [612, 622]);
cross(small, [877, 886, 895, 904, 922, 931], [787]);
cross(small, [868], [735]);
cross(small, [1016], [576]);
cross(big, [789, 798, 829, 838, 870, 879, 910, 919, 950, 959], [394]);
cross(big, [806], [424, 433, 446, 455, 464, 475, 484, 493, 506, 515, 527, 536, 545, 558, 567, 576,
    589, 598, 606, 619, 628, 641, 650, 662, 671]);
cross(big, [805], [685, 694, 706, 715, 728, 737, 750, 759]);
cross(big, [1015], [404, 412, 425, 434, 447, 456, 468, 477]);
cross(big, [900, 909, 918, 931, 940, 949], [640]);
cross(big, [868, 877, 886, 895, 904, 913, 922, 931, 940, 948], [750, 759]);
big.push([940, 280], [1016, 584], [1003, 701]);
document.getElementById("drills").innerHTML =
    small.map(([x, y]) => `<rect x="${x - 1}" y="${y - 1}" width="2" height="2" fill="#c81820"/>`).join("") +
    big.map(([x, y]) => `<path d="M${x - 2} ${y - 1}h1v-1h2v1h1v2h-1v1h-2v-1h-1z"/>`).join("");

// Vias in a ring round the chip
let seed = 7, dots = "";
for (let row = 0; row < 34; row++) {
    for (let col = 0; col < 34; col++) {
        seed = (seed * 1103515245 + 12345) % 2147483648;
        const edge = Math.min(row, col, 33 - row, 33 - col);
        if (edge < 6 && seed / 2147483648 < 0.38) {
            dots += `<rect x="${846 + Math.round(col * 3.6)}" y="${467 + Math.round(row * 3.6)}" width="2" height="2"/>`;
        }
    }
}
document.getElementById("chip-dots").innerHTML = dots;

// Enlarged part: columns that hold a via, row by row
const popRows = [[0, 1, 2, 3], [0, 1, 4], [0, 1, 2, 6], [0, 3, 4, 5], [1, 3, 4, 7], [3, 5, 6]];
document.getElementById("pop-dots").innerHTML = popRows.map((cols, row) =>
    cols.map(col => `<circle cx="${1363 + col * 60}" cy="${355 + row * 60}" r="9"/>`).join("")
).join("");
```
